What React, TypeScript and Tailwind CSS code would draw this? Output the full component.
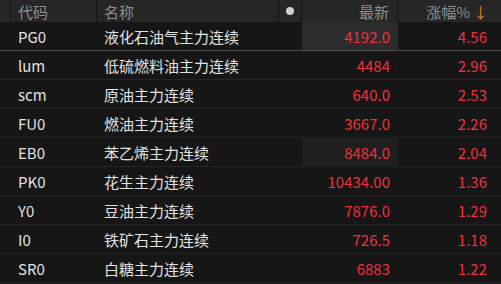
import React from 'react';

type Row = { code: string; name: string; last: string; pct: string; flash?: string };

const rows: Row[] = [
  { code: 'PG0', name: '液化石油气主力连续', last: '4192.0', pct: '4.56', flash: 'bg-[#2c2c2c]' },
  { code: 'lum', name: '低硫燃料油主力连续', last: '4484', pct: '2.96' },
  { code: 'scm', name: '原油主力连续', last: '640.0', pct: '2.53' },
  { code: 'FU0', name: '燃油主力连续', last: '3667.0', pct: '2.26' },
  { code: 'EB0', name: '苯乙烯主力连续', last: '8484.0', pct: '2.04', flash: 'bg-[#1f1f1f]' },
  { code: 'PK0', name: '花生主力连续', last: '10434.00', pct: '1.36' },
  { code: 'Y0', name: '豆油主力连续', last: '7876.0', pct: '1.29' },
  { code: 'I0', name: '铁矿石主力连续', last: '726.5', pct: '1.18' },
  { code: 'SR0', name: '白糖主力连续', last: '6883', pct: '1.22' },
];

const App: React.FC = () => {
  return (
    <div className="w-[501px] h-[284px] bg-[#161616] overflow-hidden text-[15px] leading-none font-['Noto_Sans_CJK_SC','Noto_Sans',sans-serif]">
      {/* header */}
      <div className="flex h-[22px] bg-[#262626] text-[#8e8e8e]">
        <div className="w-[11px] border-r border-[#141414]" />
        <div className="w-[86px] border-r border-[#141414] flex items-center pl-[7px]">代码</div>
        <div className="w-[182px] border-r border-[#141414] flex items-center pl-[7px]">名称</div>
        <div className="w-[23px] border-r border-[#141414] flex items-center justify-center">
          <span className="w-[8px] h-[8px] rounded-full bg-[#d0d0d0]" />
        </div>
        <div className="w-[96px] border-r border-[#141414] flex items-center justify-end pr-[8px]">最新</div>
        <div className="flex-1 flex items-center justify-end pr-[13px] gap-[3px]">
          <span>涨幅%</span>
          <span className="text-[#f07a22]">↓</span>
        </div>
      </div>

      {/* rows */}
      {rows.map((r, i) => (
        <div
          key={r.code}
          className={`flex h-[29px] border-b ${i === 0 ? 'border-[#4e4e4e]' : 'border-[#262626]'} text-[#e2e2e2]`}
        >
          <div className="w-[11px]" />
          <div className="w-[86px] flex items-center pl-[7px]">{r.code}</div>
          <div className="w-[182px] flex items-center pl-[7px]">{r.name}</div>
          <div className="w-[23px]" />
          <div className={`w-[96px] flex items-center justify-end pr-[8px] text-[#f0303c] ${r.flash ?? ''}`}>{r.last}</div>
          <div className="flex-1 flex items-center justify-end pr-[14px] text-[#f0303c]">{r.pct}</div>
        </div>
      ))}
    </div>
  );
};

export default App;
